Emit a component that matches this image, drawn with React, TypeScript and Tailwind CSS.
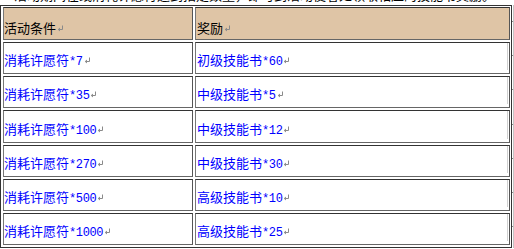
import React from "react";

const cjk = { fontFamily: '"Noto Sans CJK SC", "Noto Sans CJK TC", sans-serif' };
const mono = { fontFamily: '"Liberation Mono", "DejaVu Sans Mono", monospace' };

type Row = { cost: string; level: string; count: string };

const rows: Row[] = [
  { cost: "7", level: "初级", count: "60" },
  { cost: "35", level: "中级", count: "5" },
  { cost: "100", level: "中级", count: "12" },
  { cost: "270", level: "中级", count: "30" },
  { cost: "500", level: "高级", count: "10" },
  { cost: "1000", level: "高级", count: "25" },
];

// row heights: header first, then body rows
const heights = ["h-[33px]", "h-[32px]", "h-[32px]", "h-[33px]", "h-[32px]", "h-[32px]", "h-[32px]"];

function ParaMark() {
  return (
    <svg width="7" height="7" viewBox="0 0 7 7" className="inline-block ml-[1px] mb-[1px]">
      <path d="M5.5 0.5 V4.5 H1.5" stroke="#8a8a8a" strokeWidth="1" fill="none" />
      <path d="M3 3 L1.2 4.5 L3 6" stroke="#8a8a8a" strokeWidth="1" fill="none" />
    </svg>
  );
}

function Text({ han, num, blue }: { han: string; num?: string; blue?: boolean }) {
  return (
    <span className={`whitespace-nowrap text-[13px] leading-[16px] ${blue ? "text-[#0000ff]" : "text-black"}`} style={cjk}>
      {han}
      {num !== undefined && (
        <span className="text-[12px] tracking-[-0.4px]" style={mono}>
          *{num}
        </span>
      )}
      <ParaMark />
    </span>
  );
}

function Cell({ children, wide, header }: { children: React.ReactNode; wide?: boolean; header?: boolean }) {
  return (
    <div
      className={`flex items-end border border-t-[#333] border-l-[#777] border-r-[#555] border-b-[#666] pb-[3px] ${
        wide ? "w-[315px] pl-[1px]" : "w-[190px] pl-[0px]"
      } ${header ? "bg-[#dfc5a6]" : "bg-white"}`}
    >
      {children}
    </div>
  );
}

export default function App() {
  return (
    <div className="w-[514px] h-[249px] bg-white overflow-hidden">
      {/* tail of the paragraph above the table */}
      <div className="h-[5px] overflow-hidden">
        <div className="mt-[-13px] pl-[14px] text-[13px] leading-[16px] text-black whitespace-nowrap" style={cjk}>
          活动期间在线消耗许愿符达到指定数量，即可到活动使者处领取相应的技能书奖励。
        </div>
      </div>

      <div className="flex">
        {/* table frame */}
        <div className="w-[512px] border border-[#333] flex flex-col gap-[2px] pt-[1px] pl-[2px] pr-[1px] pb-[2px]">
          <div className={`flex gap-[2px] ${heights[0]}`}>
            <Cell header>
              <Text han="活动条件" />
            </Cell>
            <Cell header wide>
              <Text han="奖励" />
            </Cell>
          </div>
          {rows.map((r, i) => (
            <div key={i} className={`flex gap-[2px] ${heights[i + 1]}`}>
              <Cell>
                <Text han="消耗许愿符" num={r.cost} blue />
              </Cell>
              <Cell wide>
                <div className="flex-1 flex items-end h-full border-r border-[#d0d0d0] mr-[1px]">
                  <Text han={`${r.level}技能书`} num={r.count} blue />
                </div>
              </Cell>
            </div>
          ))}
        </div>

        {/* end-of-row markers */}
        <div className="w-[2px] border-r border-[#c4c4c4] flex flex-col gap-[2px] pt-[2px] pb-[3px]">
          {heights.map((h, i) => (
            <div key={i} className={`${h} flex items-center pb-[5px]`}>
              <div className="w-[2px] h-[1px] bg-[#888]" />
            </div>
          ))}
        </div>
      </div>
    </div>
  );
}
